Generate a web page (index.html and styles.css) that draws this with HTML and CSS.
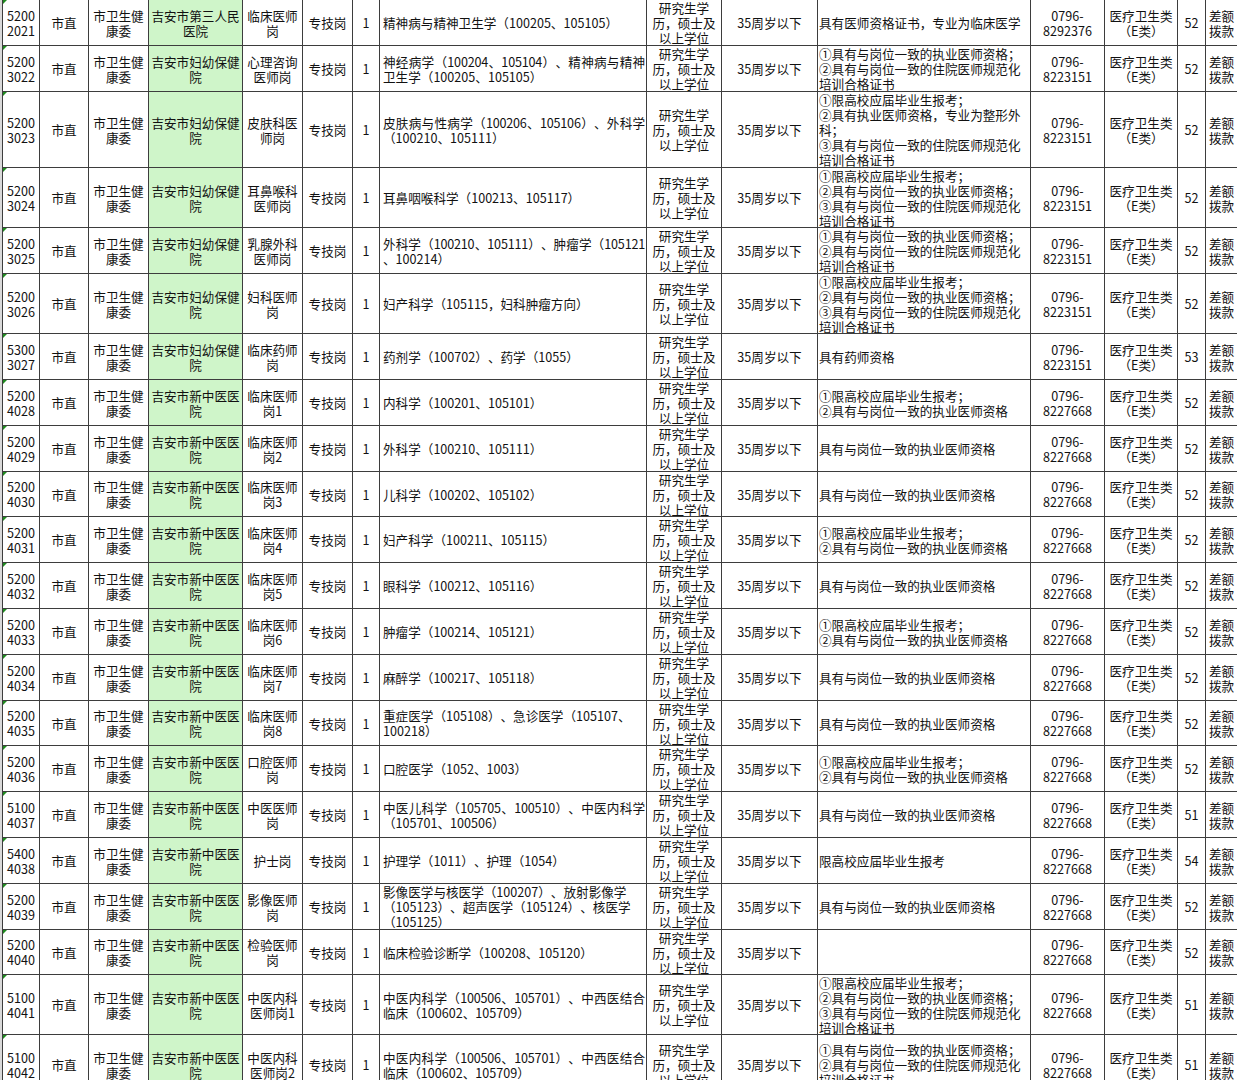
FILE: index.html
```html
<!DOCTYPE html>
<html lang="zh-CN">
<head>
<meta charset="utf-8">
<title>岗位表</title>
<link rel="stylesheet" href="styles.css">
</head>
<body>
<div class="sheet">
<!-- R1 -->
<div class="c k">5200<br>2021</div><div class="c">市直</div><div class="c">市卫生健<br>康委</div><div class="c g">吉安市第三人民<br>医院</div><div class="c">临床医师<br>岗</div><div class="c">专技岗</div><div class="c">1</div><div class="c m"><div>精神病与精神卫生学（100205、105105）</div></div><div class="c">研究生学<br>历，硕士及<br>以上学位</div><div class="c">35周岁以下</div><div class="c o">具有医师资格证书，专业为临床医学</div><div class="c">0796-<br>8292376</div><div class="c">医疗卫生类<br>（E类）</div><div class="c">52</div><div class="c">差额<br>拨款</div>
<!-- R2 -->
<div class="c k">5200<br>3022</div><div class="c">市直</div><div class="c">市卫生健<br>康委</div><div class="c g">吉安市妇幼保健<br>院</div><div class="c">心理咨询<br>医师岗</div><div class="c">专技岗</div><div class="c">1</div><div class="c m"><div><span class="j">神经病学（100204、105104）、精神病与精神</span>卫生学（100205、105105）</div></div><div class="c">研究生学<br>历，硕士及<br>以上学位</div><div class="c">35周岁以下</div><div class="c o">①具有与岗位一致的执业医师资格；<br>②具有与岗位一致的住院医师规范化<br>培训合格证书</div><div class="c">0796-<br>8223151</div><div class="c">医疗卫生类<br>（E类）</div><div class="c">52</div><div class="c">差额<br>拨款</div>
<!-- R3 -->
<div class="c k">5200<br>3023</div><div class="c">市直</div><div class="c">市卫生健<br>康委</div><div class="c g">吉安市妇幼保健<br>院</div><div class="c">皮肤科医<br>师岗</div><div class="c">专技岗</div><div class="c">1</div><div class="c m"><div><span class="j">皮肤病与性病学（100206、105106）、外科学</span>（100210、105111）</div></div><div class="c">研究生学<br>历，硕士及<br>以上学位</div><div class="c">35周岁以下</div><div class="c o">①限高校应届毕业生报考；<br>②具有执业医师资格，专业为整形外<br>科；<br>③具有与岗位一致的住院医师规范化<br>培训合格证书</div><div class="c">0796-<br>8223151</div><div class="c">医疗卫生类<br>（E类）</div><div class="c">52</div><div class="c">差额<br>拨款</div>
<!-- R4 -->
<div class="c k">5200<br>3024</div><div class="c">市直</div><div class="c">市卫生健<br>康委</div><div class="c g">吉安市妇幼保健<br>院</div><div class="c">耳鼻喉科<br>医师岗</div><div class="c">专技岗</div><div class="c">1</div><div class="c m"><div>耳鼻咽喉科学（100213、105117）</div></div><div class="c">研究生学<br>历，硕士及<br>以上学位</div><div class="c">35周岁以下</div><div class="c o">①限高校应届毕业生报考；<br>②具有与岗位一致的执业医师资格；<br>③具有与岗位一致的住院医师规范化<br>培训合格证书</div><div class="c">0796-<br>8223151</div><div class="c">医疗卫生类<br>（E类）</div><div class="c">52</div><div class="c">差额<br>拨款</div>
<!-- R5 -->
<div class="c k">5200<br>3025</div><div class="c">市直</div><div class="c">市卫生健<br>康委</div><div class="c g">吉安市妇幼保健<br>院</div><div class="c">乳腺外科<br>医师岗</div><div class="c">专技岗</div><div class="c">1</div><div class="c m"><div><span class="j">外科学（100210、105111）、肿瘤学（105121</span>、100214）</div></div><div class="c">研究生学<br>历，硕士及<br>以上学位</div><div class="c">35周岁以下</div><div class="c o">①具有与岗位一致的执业医师资格；<br>②具有与岗位一致的住院医师规范化<br>培训合格证书</div><div class="c">0796-<br>8223151</div><div class="c">医疗卫生类<br>（E类）</div><div class="c">52</div><div class="c">差额<br>拨款</div>
<!-- R6 -->
<div class="c k">5200<br>3026</div><div class="c">市直</div><div class="c">市卫生健<br>康委</div><div class="c g">吉安市妇幼保健<br>院</div><div class="c">妇科医师<br>岗</div><div class="c">专技岗</div><div class="c">1</div><div class="c m"><div>妇产科学（105115，妇科肿瘤方向）</div></div><div class="c">研究生学<br>历，硕士及<br>以上学位</div><div class="c">35周岁以下</div><div class="c o">①限高校应届毕业生报考；<br>②具有与岗位一致的执业医师资格；<br>③具有与岗位一致的住院医师规范化<br>培训合格证书</div><div class="c">0796-<br>8223151</div><div class="c">医疗卫生类<br>（E类）</div><div class="c">52</div><div class="c">差额<br>拨款</div>
<!-- R7 -->
<div class="c k">5300<br>3027</div><div class="c">市直</div><div class="c">市卫生健<br>康委</div><div class="c g">吉安市妇幼保健<br>院</div><div class="c">临床药师<br>岗</div><div class="c">专技岗</div><div class="c">1</div><div class="c m"><div>药剂学（100702）、药学（1055）</div></div><div class="c">研究生学<br>历，硕士及<br>以上学位</div><div class="c">35周岁以下</div><div class="c o">具有药师资格</div><div class="c">0796-<br>8223151</div><div class="c">医疗卫生类<br>（E类）</div><div class="c">53</div><div class="c">差额<br>拨款</div>
<!-- R8 -->
<div class="c k">5200<br>4028</div><div class="c">市直</div><div class="c">市卫生健<br>康委</div><div class="c g">吉安市新中医医<br>院</div><div class="c">临床医师<br>岗1</div><div class="c">专技岗</div><div class="c">1</div><div class="c m"><div>内科学（100201、105101）</div></div><div class="c">研究生学<br>历，硕士及<br>以上学位</div><div class="c">35周岁以下</div><div class="c o">①限高校应届毕业生报考；<br>②具有与岗位一致的执业医师资格</div><div class="c">0796-<br>8227668</div><div class="c">医疗卫生类<br>（E类）</div><div class="c">52</div><div class="c">差额<br>拨款</div>
<!-- R9 -->
<div class="c k">5200<br>4029</div><div class="c">市直</div><div class="c">市卫生健<br>康委</div><div class="c g">吉安市新中医医<br>院</div><div class="c">临床医师<br>岗2</div><div class="c">专技岗</div><div class="c">1</div><div class="c m"><div>外科学（100210、105111）</div></div><div class="c">研究生学<br>历，硕士及<br>以上学位</div><div class="c">35周岁以下</div><div class="c o">具有与岗位一致的执业医师资格</div><div class="c">0796-<br>8227668</div><div class="c">医疗卫生类<br>（E类）</div><div class="c">52</div><div class="c">差额<br>拨款</div>
<!-- R10 -->
<div class="c k">5200<br>4030</div><div class="c">市直</div><div class="c">市卫生健<br>康委</div><div class="c g">吉安市新中医医<br>院</div><div class="c">临床医师<br>岗3</div><div class="c">专技岗</div><div class="c">1</div><div class="c m"><div>儿科学（100202、105102）</div></div><div class="c">研究生学<br>历，硕士及<br>以上学位</div><div class="c">35周岁以下</div><div class="c o">具有与岗位一致的执业医师资格</div><div class="c">0796-<br>8227668</div><div class="c">医疗卫生类<br>（E类）</div><div class="c">52</div><div class="c">差额<br>拨款</div>
<!-- R11 -->
<div class="c k">5200<br>4031</div><div class="c">市直</div><div class="c">市卫生健<br>康委</div><div class="c g">吉安市新中医医<br>院</div><div class="c">临床医师<br>岗4</div><div class="c">专技岗</div><div class="c">1</div><div class="c m"><div>妇产科学（100211、105115）</div></div><div class="c">研究生学<br>历，硕士及<br>以上学位</div><div class="c">35周岁以下</div><div class="c o">①限高校应届毕业生报考；<br>②具有与岗位一致的执业医师资格</div><div class="c">0796-<br>8227668</div><div class="c">医疗卫生类<br>（E类）</div><div class="c">52</div><div class="c">差额<br>拨款</div>
<!-- R12 -->
<div class="c k">5200<br>4032</div><div class="c">市直</div><div class="c">市卫生健<br>康委</div><div class="c g">吉安市新中医医<br>院</div><div class="c">临床医师<br>岗5</div><div class="c">专技岗</div><div class="c">1</div><div class="c m"><div>眼科学（100212、105116）</div></div><div class="c">研究生学<br>历，硕士及<br>以上学位</div><div class="c">35周岁以下</div><div class="c o">具有与岗位一致的执业医师资格</div><div class="c">0796-<br>8227668</div><div class="c">医疗卫生类<br>（E类）</div><div class="c">52</div><div class="c">差额<br>拨款</div>
<!-- R13 -->
<div class="c k">5200<br>4033</div><div class="c">市直</div><div class="c">市卫生健<br>康委</div><div class="c g">吉安市新中医医<br>院</div><div class="c">临床医师<br>岗6</div><div class="c">专技岗</div><div class="c">1</div><div class="c m"><div>肿瘤学（100214、105121）</div></div><div class="c">研究生学<br>历，硕士及<br>以上学位</div><div class="c">35周岁以下</div><div class="c o">①限高校应届毕业生报考；<br>②具有与岗位一致的执业医师资格</div><div class="c">0796-<br>8227668</div><div class="c">医疗卫生类<br>（E类）</div><div class="c">52</div><div class="c">差额<br>拨款</div>
<!-- R14 -->
<div class="c k">5200<br>4034</div><div class="c">市直</div><div class="c">市卫生健<br>康委</div><div class="c g">吉安市新中医医<br>院</div><div class="c">临床医师<br>岗7</div><div class="c">专技岗</div><div class="c">1</div><div class="c m"><div>麻醉学（100217、105118）</div></div><div class="c">研究生学<br>历，硕士及<br>以上学位</div><div class="c">35周岁以下</div><div class="c o">具有与岗位一致的执业医师资格</div><div class="c">0796-<br>8227668</div><div class="c">医疗卫生类<br>（E类）</div><div class="c">52</div><div class="c">差额<br>拨款</div>
<!-- R15 -->
<div class="c k">5200<br>4035</div><div class="c">市直</div><div class="c">市卫生健<br>康委</div><div class="c g">吉安市新中医医<br>院</div><div class="c">临床医师<br>岗8</div><div class="c">专技岗</div><div class="c">1</div><div class="c m"><div>重症医学（105108）、急诊医学（105107、<br>100218）</div></div><div class="c">研究生学<br>历，硕士及<br>以上学位</div><div class="c">35周岁以下</div><div class="c o">具有与岗位一致的执业医师资格</div><div class="c">0796-<br>8227668</div><div class="c">医疗卫生类<br>（E类）</div><div class="c">52</div><div class="c">差额<br>拨款</div>
<!-- R16 -->
<div class="c k">5200<br>4036</div><div class="c">市直</div><div class="c">市卫生健<br>康委</div><div class="c g">吉安市新中医医<br>院</div><div class="c">口腔医师<br>岗</div><div class="c">专技岗</div><div class="c">1</div><div class="c m"><div>口腔医学（1052、1003）</div></div><div class="c">研究生学<br>历，硕士及<br>以上学位</div><div class="c">35周岁以下</div><div class="c o">①限高校应届毕业生报考；<br>②具有与岗位一致的执业医师资格</div><div class="c">0796-<br>8227668</div><div class="c">医疗卫生类<br>（E类）</div><div class="c">52</div><div class="c">差额<br>拨款</div>
<!-- R17 -->
<div class="c k">5100<br>4037</div><div class="c">市直</div><div class="c">市卫生健<br>康委</div><div class="c g">吉安市新中医医<br>院</div><div class="c">中医医师<br>岗</div><div class="c">专技岗</div><div class="c">1</div><div class="c m"><div><span class="j">中医儿科学（105705、100510）、中医内科学</span>（105701、100506）</div></div><div class="c">研究生学<br>历，硕士及<br>以上学位</div><div class="c">35周岁以下</div><div class="c o">具有与岗位一致的执业医师资格</div><div class="c">0796-<br>8227668</div><div class="c">医疗卫生类<br>（E类）</div><div class="c">51</div><div class="c">差额<br>拨款</div>
<!-- R18 -->
<div class="c k">5400<br>4038</div><div class="c">市直</div><div class="c">市卫生健<br>康委</div><div class="c g">吉安市新中医医<br>院</div><div class="c">护士岗</div><div class="c">专技岗</div><div class="c">1</div><div class="c m"><div>护理学（1011）、护理（1054）</div></div><div class="c">研究生学<br>历，硕士及<br>以上学位</div><div class="c">35周岁以下</div><div class="c o">限高校应届毕业生报考</div><div class="c">0796-<br>8227668</div><div class="c">医疗卫生类<br>（E类）</div><div class="c">54</div><div class="c">差额<br>拨款</div>
<!-- R19 -->
<div class="c k">5200<br>4039</div><div class="c">市直</div><div class="c">市卫生健<br>康委</div><div class="c g">吉安市新中医医<br>院</div><div class="c">影像医师<br>岗</div><div class="c">专技岗</div><div class="c">1</div><div class="c m"><div>影像医学与核医学（100207）、放射影像学<br>（105123）、超声医学（105124）、核医学<br>（105125）</div></div><div class="c">研究生学<br>历，硕士及<br>以上学位</div><div class="c">35周岁以下</div><div class="c o">具有与岗位一致的执业医师资格</div><div class="c">0796-<br>8227668</div><div class="c">医疗卫生类<br>（E类）</div><div class="c">52</div><div class="c">差额<br>拨款</div>
<!-- R20 -->
<div class="c k">5200<br>4040</div><div class="c">市直</div><div class="c">市卫生健<br>康委</div><div class="c g">吉安市新中医医<br>院</div><div class="c">检验医师<br>岗</div><div class="c">专技岗</div><div class="c">1</div><div class="c m"><div>临床检验诊断学（100208、105120）</div></div><div class="c">研究生学<br>历，硕士及<br>以上学位</div><div class="c">35周岁以下</div><div class="c o"></div><div class="c">0796-<br>8227668</div><div class="c">医疗卫生类<br>（E类）</div><div class="c">52</div><div class="c">差额<br>拨款</div>
<!-- R21 -->
<div class="c k">5100<br>4041</div><div class="c">市直</div><div class="c">市卫生健<br>康委</div><div class="c g">吉安市新中医医<br>院</div><div class="c">中医内科<br>医师岗1</div><div class="c">专技岗</div><div class="c">1</div><div class="c m"><div><span class="j">中医内科学（100506、105701）、中西医结合</span>临床（100602、105709）</div></div><div class="c">研究生学<br>历，硕士及<br>以上学位</div><div class="c">35周岁以下</div><div class="c o">①限高校应届毕业生报考；<br>②具有与岗位一致的执业医师资格；<br>③具有与岗位一致的住院医师规范化<br>培训合格证书</div><div class="c">0796-<br>8227668</div><div class="c">医疗卫生类<br>（E类）</div><div class="c">51</div><div class="c">差额<br>拨款</div>
<!-- R22 -->
<div class="c k">5100<br>4042</div><div class="c">市直</div><div class="c">市卫生健<br>康委</div><div class="c g">吉安市新中医医<br>院</div><div class="c">中医内科<br>医师岗2</div><div class="c">专技岗</div><div class="c">1</div><div class="c m"><div><span class="j">中医内科学（100506、105701）、中西医结合</span>临床（100602、105709）</div></div><div class="c">研究生学<br>历，硕士及<br>以上学位</div><div class="c">35周岁以下</div><div class="c o">①具有与岗位一致的执业医师资格；<br>②具有与岗位一致的住院医师规范化<br>培训合格证书</div><div class="c">0796-<br>8227668</div><div class="c">医疗卫生类<br>（E类）</div><div class="c">51</div><div class="c">差额<br>拨款</div>
</div>
</body>
</html>
```

FILE: styles.css
```css
html, body {
  margin: 0;
  padding: 0;
  overflow: hidden;
}
body {
  background: #d9d9d9;
  font-family: "Noto Sans CJK SC", "Noto Sans", sans-serif;
  font-size: 12.6px;
  line-height: 15px;
  color: #111;
  text-spacing-trim: space-all;
  text-autospace: no-autospace;
}
.sheet {
  display: grid;
  grid-template-columns: 36px 48px 59px 93px 59px 49px 26px 266px 74px 95px 212px 73px 72px 27px 31px;
  grid-template-rows: 45px 45px 75px 59px 45px 59px 45px 45px 45px 44px 45px 45px 45px 45px 44px 45px 45px 45px 45px 44px 59px 59px;
  gap: 1px;
  padding: 1px;
  background: #3d3d3d;
  width: max-content;
  margin: -1px 0 0 2px;
}
.c {
  background: #fff;
  display: flex;
  align-items: center;
  justify-content: center;
  text-align: center;
  overflow: hidden;
  position: relative;
  white-space: nowrap;
}
.g {
  background: #cff5c9;
}
.m {
  justify-content: flex-start;
  text-align: left;
  padding: 0 1px 0 3px;
}
.m > div {
  flex: 1;
  min-width: 0;
}
.j {
  display: block;
  white-space: normal;
  letter-spacing: -0.2px;
  text-align: justify;
  text-align-last: justify;
}
.o {
  justify-content: flex-start;
  text-align: left;
  padding-left: 1px;
}
.k::before {
  content: "";
  position: absolute;
  top: 0;
  left: 0;
  border-top: 4px solid #1f8a1f;
  border-right: 4px solid transparent;
}
```
